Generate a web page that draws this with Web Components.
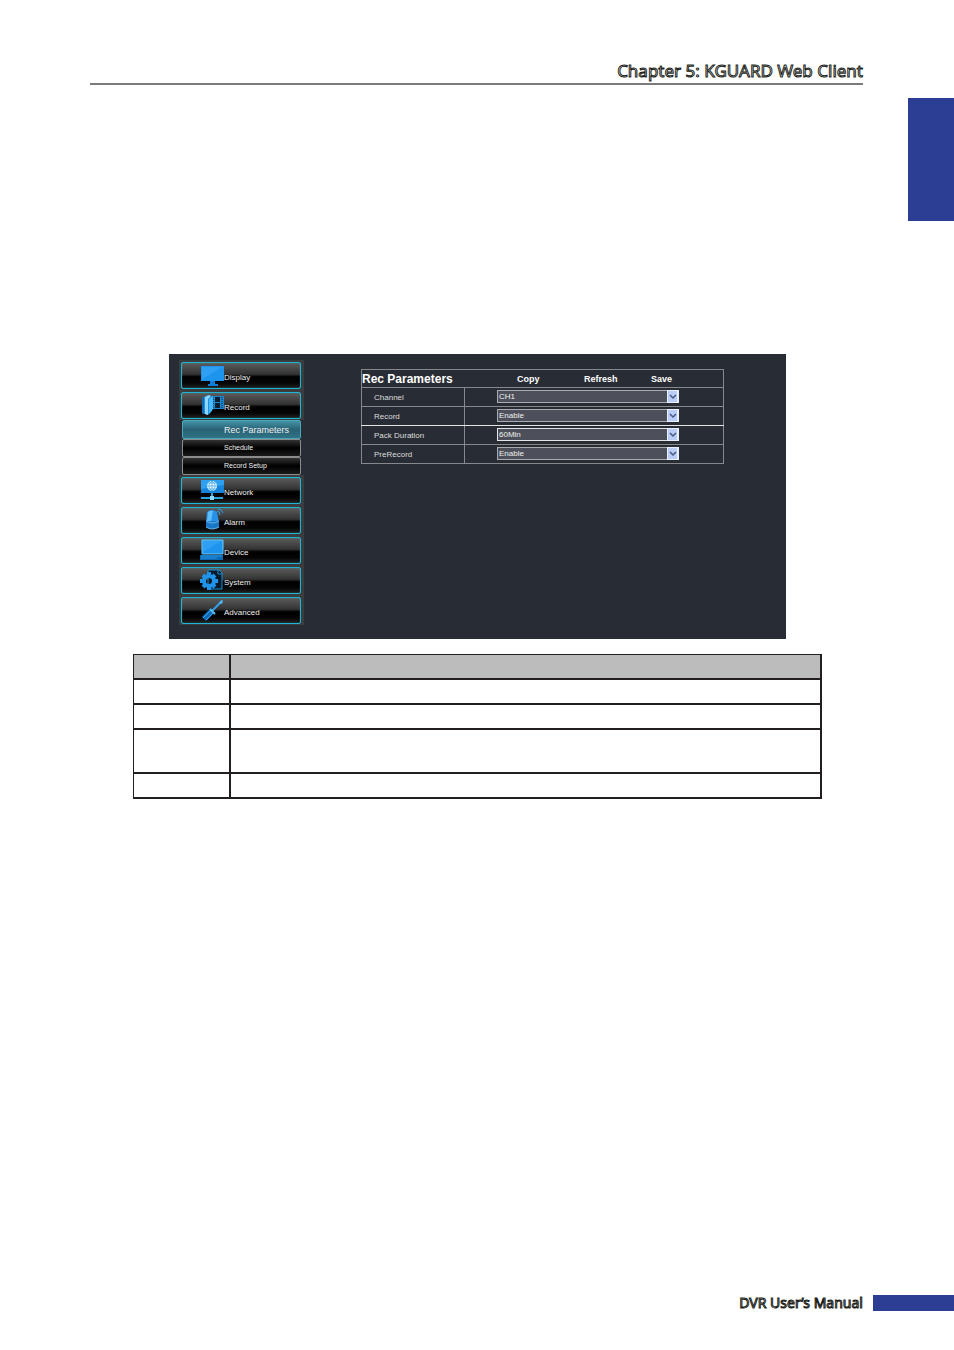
<!DOCTYPE html>
<html lang="en">
<head>
<meta charset="utf-8">
<meta name="viewport" content="width=device-width, initial-scale=1">
<title>DVR User's Manual</title>
<style>
  body {
    margin: 0;
    background: #fff;
    font-family: "Liberation Sans", Arial, sans-serif;
    --ink: #231f20;
    --brand: #2c3e93;
    --panel: #282c34;
  }
</style>
</head>
<body>
<manual-page>
  <span slot="chapter">Chapter 5: KGUARD Web Client</span>
  <dvr-panel>
    <nav-item slot="nav" icon="display">Display</nav-item>
    <nav-item slot="nav" icon="record">Record</nav-item>
    <nav-subitem slot="nav" current>Rec Parameters</nav-subitem>
    <nav-subitem slot="nav">Schedule</nav-subitem>
    <nav-subitem slot="nav">Record Setup</nav-subitem>
    <nav-item slot="nav" icon="network">Network</nav-item>
    <nav-item slot="nav" icon="alarm">Alarm</nav-item>
    <nav-item slot="nav" icon="device">Device</nav-item>
    <nav-item slot="nav" icon="system">System</nav-item>
    <nav-item slot="nav" icon="advanced">Advanced</nav-item>
    <rec-parameters></rec-parameters>
  </dvr-panel>
  <item-table></item-table>
  <span slot="footer">DVR User’s Manual</span>
</manual-page>

<script>
const ICONS = {
  display: `
    <path d="M1 3h23v15H1z" fill="#1d94ee"/>
    <path d="M2 4h21L2 16z" fill="#2f9ff4"/>
    <path d="M10 18h5v3h3v2H8v-2h2z" fill="#0b7edb"/>`,
  record: `
    <path d="M11 3h13v13H11z" fill="#1d86cc"/>
    <path d="M15 4h5v5h-5zM15 10h5v5h-5z" fill="#0a1c30"/>
    <path d="M22 4v12M13 4v12" stroke="#0a1c30" stroke-dasharray="1 1"/>
    <path d="M2 5l6-3 4 2v14l-4 4-6-2z" fill="#1c8fe0"/>
    <path d="M2 5l2-1v17l-2-1z" fill="#0c6cb8"/>
    <path d="M5 4l4-2 2 1-3 3v16l-3-1z" fill="#8ed4fc"/>
    <path d="M9 6l4-3v13l-4 5z" fill="#45b9f6"/>`,
  network: `
    <path d="M1 2h23v13H1z" fill="#1583dc"/>
    <path d="M1 2h23v5L1 11z" fill="#2f9ff0"/>
    <circle cx="12" cy="8" r="5" fill="#eaf8ff"/>
    <path d="M7 8h10M12 3v10M8 5h8M8 11h8M12 3c-4 3-4 7 0 10M12 3c4 3 4 7 0 10" fill="none" stroke="#3aa3e8" stroke-width=".7"/>
    <path d="M12 15v5M1 20h22" stroke="#29a4e6" stroke-width="2"/>
    <path d="M10 18h4v4h-4z" fill="#8ed8fa"/>`,
  alarm: `
    <path d="M7 4q5-4 10 0l2 10H6z" fill="#2590e8"/>
    <path d="M8 4q3-2 5-1l-2 11H7z" fill="#5dbdfa"/>
    <path d="M6 13h13v6q-6 4-13 0z" fill="#1877c8"/>
    <path d="M6 13q6 4 13 0M6 19q6 4 13 0" fill="none" stroke="#67b5e8"/>
    <path d="M17 3q3 0 3 4M18 1q4 0 5 4" fill="none" stroke="#2ba0e6"/>`,
  device: `
    <path d="M2 2h21v14H2z" fill="#1d94ee" stroke="#6ccaf8"/>
    <path d="M3 3h19L3 14z" fill="#2f9ff4"/>
    <path d="M0 17h23v5H0z" fill="#0b68b4"/>
    <path d="M1 18h21M1 20h16" stroke="#2a96e0"/>`,
  system: `
    <path d="M8 2h11l3 3v16H8z" fill="#071a2a" stroke="#1c8fd0"/>
    <path d="M18 2v4h4" fill="none" stroke="#1c8fd0"/>
    <circle cx="9" cy="13" r="5" fill="none" stroke="#2094ea" stroke-width="4"/>
    <path d="M9 4v4M9 18v4M0 13h4M14 13h4M3 7l2 2M13 17l2 2M15 7l-2 2M5 17l-2 2" stroke="#2094ea" stroke-width="4"/>`,
  advanced: `
    <path d="M22 3L12 13" stroke="#35a2e8" stroke-width="2"/>
    <path d="M20 3l3-1-1 4-3-1z" fill="#4db5f2"/>
    <path d="M12 13l-8 8" stroke="#0f68b4" stroke-width="6"/>
    <path d="M11 12l-8 8M14 14l-8 8" stroke="#3aa5ee"/>
    <path d="M10 11l5 5" stroke="#55bdf6" stroke-width="2"/>`,
};

class BaseElement extends HTMLElement {
  constructor() {
    super();
    const template = document.createElement("template");
    template.innerHTML = this.render();
    this.attachShadow({ mode: "open" });
    this.shadowRoot.appendChild(template.content.cloneNode(true));
  }
}

class ManualPage extends BaseElement {
  render() {
    return `
<style>
  :host {
    display: flex;
    flex-direction: column;
    min-height: 100vh;
    box-sizing: border-box;
    padding-bottom: 39px;
  }
  header {
    margin: 0 91px 0 90px;
    padding-top: 58px;
    border-bottom: 2px solid #7c7a7b;
    text-align: right;
  }
  h1, p {
    margin: 0;
    color: #fff;
    font-family: "Noto Sans", "Open Sans", sans-serif;
    font-weight: 400;
    -webkit-text-stroke: 1px var(--ink);
  }
  h1 {
    font-size: 17px;
    line-height: 25px;
  }
  .body {
    flex: 1;
    display: grid;
    grid-template-columns: 1fr 46px;
    align-items: start;
    margin-top: 13px;
  }
  main {
    padding: 256px 86px 0 133px;
  }
  aside {
    height: 123px;
    background: var(--brand);
  }
  footer {
    display: grid;
    grid-template-columns: 1fr 81px;
    column-gap: 10px;
    align-items: center;
  }
  p {
    font-size: 14px;
    line-height: 16px;
    text-align: right;
  }
  .bar {
    height: 16px;
    background: var(--brand);
  }
</style>
<header><h1><slot name="chapter"></slot></h1></header>
<div class="body">
  <main><slot></slot></main>
  <aside></aside>
</div>
<footer><p><slot name="footer"></slot></p><div class="bar"></div></footer>`;
  }
}

class DvrPanel extends BaseElement {
  render() {
    return `
<style>
  :host {
    display: flex;
    align-items: flex-start;
    gap: 57px;
    margin: 0 36px 15px;
    padding: 6px 62px 14px 10px;
    background: var(--panel);
  }
  nav {
    flex: 0 0 125px;
  }
  section {
    flex: 1;
    min-width: 0;
    padding-top: 9px;
  }
</style>
<nav><slot name="nav"></slot></nav>
<section><slot></slot></section>`;
  }
}

class NavItem extends BaseElement {
  render() {
    return `
<style>
  :host {
    display: block;
    padding: 2px 3px 1px 2px;
    background: #3b3c3e;
  }
  button {
    display: flex;
    align-items: flex-start;
    width: 100%;
    height: 27px;
    padding: 0 0 0 18px;
    border: 1px solid #1fb4d2;
    border-radius: 2px;
    box-shadow: inset 0 0 1px #1fb4d2;
    background: linear-gradient(#5c5c5c, #333 45%, #000 55%, #050505 80%, #222);
    color: #f0f0f0;
    font: 8px/12px "Liberation Sans", Arial, sans-serif;
    cursor: pointer;
  }
  svg {
    flex: none;
    width: 24px;
    height: 24px;
  }
  span {
    padding-top: 9px;
  }
</style>
<button type="button"><svg viewBox="0 0 24 24" aria-hidden="true">${ICONS[this.getAttribute("icon")]}</svg><span><slot></slot></span></button>`;
  }
}

class NavSubitem extends BaseElement {
  render() {
    return `
<style>
  :host {
    display: block;
    padding: 0 3px;
  }
  button {
    display: block;
    width: 100%;
    height: 18px;
    padding: 0 0 0 41px;
    border: 1px solid #8c8c8c;
    border-radius: 2px;
    background: linear-gradient(#333, #000 50%, #1a1a1a);
    color: #f0f0f0;
    font: 7px/14px "Liberation Sans", Arial, sans-serif;
    text-align: left;
    cursor: pointer;
  }
  :host([current]) button {
    height: 19px;
    border-color: #4aa6bb;
    background: linear-gradient(#4594a8, #286274 50%, #2f7486);
    font-size: 9px;
  }
</style>
<button type="button"><slot></slot></button>`;
  }
}

class RecParameters extends BaseElement {
  render() {
    const rows = [
      ["channel", "Channel", "CH1"],
      ["record", "Record", "Enable"],
      ["duration", "Pack Duration", "60Min"],
      ["prerecord", "PreRecord", "Enable"],
    ];
    return `
<style>
  :host {
    display: block;
    color: #dcdcdc;
  }
  table {
    width: 100%;
    table-layout: fixed;
    border-collapse: collapse;
    font-size: 8px;
    line-height: 12px;
  }
  .name {
    width: 103px;
  }
  th, td {
    height: 18px;
    padding: 0;
    border: 1px solid #85898c;
    font-weight: 400;
    text-align: left;
  }
  thead th {
    height: 17px;
  }
  tbody th {
    padding: 2px 0 0 12px;
    box-sizing: border-box;
  }
  tr.above > * {
    border-bottom-color: #e4e4e4;
  }
  .head {
    display: flex;
    align-items: center;
    padding-top: 2px;
  }
  h2 {
    flex: 0 0 155px;
    margin: 0;
    color: #fff;
    font-size: 12px;
    line-height: 15px;
  }
  .head button {
    flex: 0 0 67px;
    padding: 0;
    border: 0;
    background: none;
    color: #fff;
    font: bold 9px/15px "Liberation Sans", Arial, sans-serif;
    text-align: left;
    cursor: pointer;
  }
  .head button:last-child {
    flex-basis: 40px;
  }
  .field {
    display: grid;
    margin: 0 44px 2px 32px;
  }
  select, svg {
    grid-area: 1 / 1;
  }
  select {
    appearance: none;
    width: 100%;
    height: 13px;
    padding: 0 12px 0 1px;
    border: 1px solid #a9abb0;
    border-radius: 0;
    background: #4d505a;
    color: #f0f0f0;
    font: 8px/11px "Liberation Sans", Arial, sans-serif;
  }
  .lit select {
    border-color: #e4e4e4;
  }
  svg {
    justify-self: end;
    width: 12px;
    height: 13px;
    pointer-events: none;
  }
</style>
<table>
  <colgroup><col class="name"><col></colgroup>
  <thead>
    <tr><th colspan="2"><div class="head">
      <h2>Rec Parameters</h2>
      <button type="button">Copy</button>
      <button type="button">Refresh</button>
      <button type="button">Save</button>
    </div></th></tr>
  </thead>
  <tbody>
    ${rows.map(([id, label, value]) => `
    <tr class="${id === "duration" ? "lit" : id === "record" ? "above" : ""}">
      <th scope="row"><label for="${id}">${label}</label></th>
      <td><div class="field">
        <select id="${id}"><option>${value}</option></select>
        <svg viewBox="0 0 12 13" aria-hidden="true">
          <path d="M0 0h12v13H0z" fill="#e9f0ff"/>
          <path d="M1 1h9v11H1z" fill="#b9cdf8"/>
          <path d="M3 5l3 3 3-3" fill="none" stroke="#45597f" stroke-width="1.5"/>
        </svg>
      </div></td>
    </tr>`).join("")}
  </tbody>
</table>`;
  }
}

class ItemTable extends BaseElement {
  render() {
    return `
<style>
  :host {
    display: block;
  }
  table {
    width: 100%;
    table-layout: fixed;
    border-spacing: 0;
    border: solid var(--ink);
    border-width: 1px 0 0 1px;
  }
  .item {
    width: 97px;
  }
  th, td {
    height: 23px;
    padding: 0;
    border: solid var(--ink);
    border-width: 0 2px 2px 0;
  }
  th {
    background: #bcbcbc;
  }
  .tall td {
    height: 42px;
  }
</style>
<table>
  <colgroup><col class="item"><col></colgroup>
  <thead><tr><th></th><th></th></tr></thead>
  <tbody>
    <tr><td></td><td></td></tr>
    <tr><td></td><td></td></tr>
    <tr class="tall"><td></td><td></td></tr>
    <tr><td></td><td></td></tr>
  </tbody>
</table>`;
  }
}

customElements.define("manual-page", ManualPage);
customElements.define("dvr-panel", DvrPanel);
customElements.define("nav-item", NavItem);
customElements.define("nav-subitem", NavSubitem);
customElements.define("rec-parameters", RecParameters);
customElements.define("item-table", ItemTable);
</script>
</body>
</html>
